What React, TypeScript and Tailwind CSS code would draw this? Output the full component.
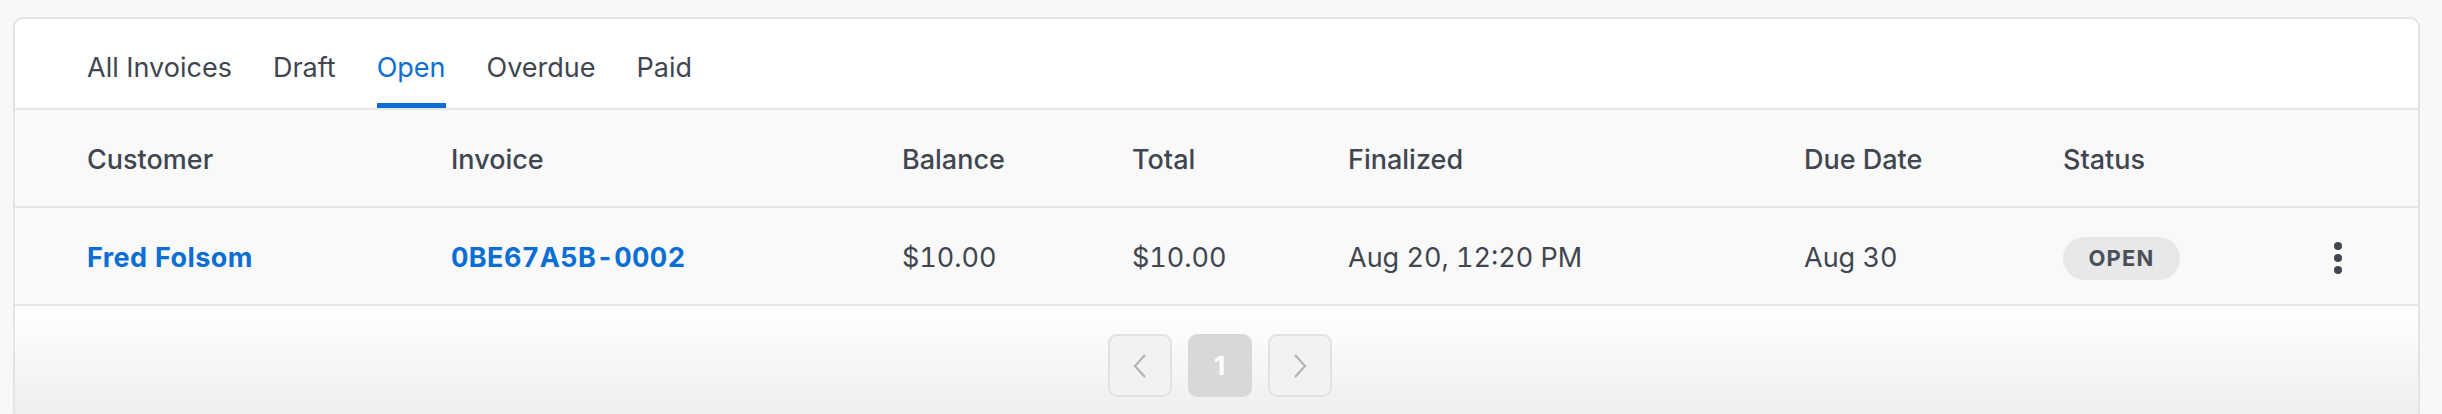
import React from "react";

const tabs = ["All Invoices", "Draft", "Open", "Overdue", "Paid"];
const cols = "grid grid-cols-[364px_451px_230px_216px_456px_259px_1fr_8px] items-center pl-[72px] pr-[76px] pt-[4px]";

export default function App() {
  return (
    <div
      className="w-[2442px] h-[414px] overflow-hidden bg-[#f7f8fa] pt-[17px] pl-[13px]"
      style={{ fontFamily: 'Inter, "Noto Sans", sans-serif' }}
    >
      <div className="w-[2407px] h-[420px] bg-white border-2 border-[#e4e4e4] rounded-[10px] overflow-hidden flex flex-col">
        {/* Tabs */}
        <div className="h-[91px] flex items-end gap-[41px] pl-[72px] border-b-2 border-[#e6e6e6]">
          {tabs.map((t) => (
            <div
              key={t}
              className={
                "h-full flex flex-col justify-between text-[27px] leading-none " +
                (t === "Open" ? "text-[#0a6ed4]" : "text-[#3f4650]")
              }
            >
              <div className="h-[5px]" />
              <span className="pt-[8px]">{t}</span>
              <div className={"h-[5px] " + (t === "Open" ? "bg-[#0a6ed4]" : "bg-transparent")} />
            </div>
          ))}
        </div>
        {/* Header */}
        <div className={cols + " h-[98px] bg-[#f9f9f9] border-b-2 border-[#e6e6e6] text-[27px] font-medium text-[#3f4650]"}>
          <span>Customer</span>
          <span>Invoice</span>
          <span>Balance</span>
          <span>Total</span>
          <span>Finalized</span>
          <span>Due Date</span>
          <span>Status</span>
          <span />
        </div>
        {/* Row */}
        <div className={cols + " h-[98px] bg-[#f9f9f9] border-b-2 border-[#e6e6e6] text-[27px] text-[#3f4650] tabular-nums"}>
          <span className="font-bold text-[#0a6ed4] tracking-[0.4px]">Fred Folsom</span>
          <span className="font-bold text-[#0a6ed4] tracking-[0.4px]">0BE67A5B-0002</span>
          <span>$10.00</span>
          <span>$10.00</span>
          <span>Aug 20, 12:20 PM</span>
          <span>Aug 30</span>
          <span>
            <span className="inline-flex items-center justify-center w-[117px] h-[43px] rounded-full bg-[#e8e8e8] text-[22px] font-bold tracking-[1.2px] text-[#4a5058]">
              OPEN
            </span>
          </span>
          <span className="flex flex-col items-center gap-[4px]">
            <span className="w-[8px] h-[8px] rounded-full bg-[#3f4650]" />
            <span className="w-[8px] h-[8px] rounded-full bg-[#3f4650]" />
            <span className="w-[8px] h-[8px] rounded-full bg-[#3f4650]" />
          </span>
        </div>
        {/* Pagination */}
        <div className="flex-1 bg-gradient-to-b from-white to-[#ececec] flex justify-center pt-[28px] pl-[6px] gap-[16px]">
          <div className="w-[64px] h-[63px] rounded-[9px] border-2 border-[#e2e2e2] bg-[#f2f2f2] flex items-center justify-center">
            <svg width="16" height="26" viewBox="0 0 16 26" fill="none" stroke="#b4b4b4" strokeWidth="2.2">
              <polyline points="13,2 3,13 13,24" />
            </svg>
          </div>
          <div className="w-[64px] h-[63px] rounded-[9px] bg-[#d8d8d8] flex items-center justify-center text-white text-[26px] font-bold">
            1
          </div>
          <div className="w-[64px] h-[63px] rounded-[9px] border-2 border-[#e2e2e2] bg-[#f2f2f2] flex items-center justify-center">
            <svg width="16" height="26" viewBox="0 0 16 26" fill="none" stroke="#b4b4b4" strokeWidth="2.2">
              <polyline points="3,2 13,13 3,24" />
            </svg>
          </div>
        </div>
      </div>
    </div>
  );
}
